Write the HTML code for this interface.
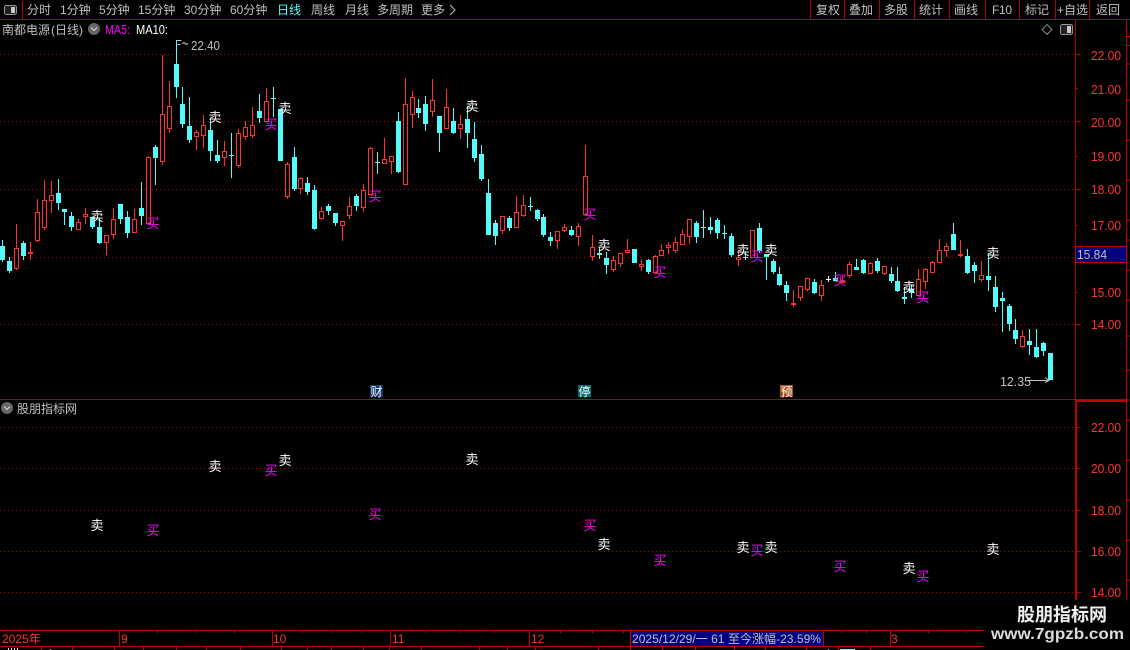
<!DOCTYPE html>
<html lang="zh"><head><meta charset="utf-8"><title>南都电源</title>
<style>
html,body{margin:0;padding:0;background:#000;width:1130px;height:650px;overflow:hidden}
svg{display:block;position:absolute;left:0;top:0}
text{font-family:"Liberation Sans","WenQuanYi Zen Hei","Noto Sans CJK SC",sans-serif;font-size:12px;fill:#c0c0c0}
.n{font-size:13px}
.r{fill:#ff3232}
.s{fill:#fff;font-size:13px;text-anchor:middle}
.b{fill:#ff00ff;font-size:13px;text-anchor:middle}
.grid{stroke:#a80000;stroke-width:1;stroke-dasharray:1 3;fill:none}
.ln{stroke:#b00000;stroke-width:1;fill:none}
</style></head><body>
<svg width="1130" height="650" viewBox="0 0 1130 650">
<rect width="1130" height="650" fill="#000"/>

<!-- grid lines -->
<path class="grid" d="M0 54.5H1075M0 121.5H1075M0 189.5H1075M0 257.5H1075M0 324.5H1075M0 427.5H1075M0 468.5H1075M0 510.5H1075M0 551.5H1075M0 592.5H1075"/>

<!-- cyan candles -->
<path fill="none" stroke="#54fcfc" stroke-width="1" d="M2.5 240V262M9.5 257V273M23.5 241V260M58.5 179V210M64.5 209V225M71.5 212V231M92.5 217V229M99.5 218V244M120.5 204V224M127.5 211V238M141.5 182V225M155.5 145V185M176.5 40V98M182.5 87V128M189.5 97V143M210.5 118V161M217.5 140V163M231.5 133V178M259.5 94V123M273.5 87V117M294.5 147V191M307.5 177V195M314.5 185V230M328.5 204V215M335.5 213V226M356.5 194V211M377.5 152V174M398.5 112V173M418.5 99V118M425.5 96V131M439.5 116V152M453.5 108V134M467.5 106V148M474.5 122V162M481.5 145V181M488.5 179V235M495.5 220V245M509.5 216V231M530.5 197V211M537.5 209V221M543.5 214V237M550.5 232V246M571.5 226V236M599.5 247V259M606.5 252V274M648.5 259V274M696.5 221V243M703.5 210V238M710.5 217V234M717.5 218V239M724.5 225V239M731.5 233V257M745.5 251V260M759.5 223V253M766.5 254V280M773.5 259V274M779.5 267V286M786.5 281V301M814.5 279V294M835.5 272V281M856.5 259V270M863.5 259V274M877.5 258V273M891.5 267V283M897.5 267V292M904.5 287V304M911.5 285V298M953.5 223V250M967.5 249V274M974.5 262V283M988.5 253V291M995.5 276V312M1002.5 292V332M1009.5 304V331M1015.5 319V344M1029.5 329V355M1036.5 329V358M1043.5 342V356"/>
<path fill="none" stroke="#54fcfc" stroke-width="5" d="M2.5 246V260M9.5 261V271M23.5 243V256M58.5 193V203M64.5 209V212M71.5 216V227M92.5 217V227M99.5 227V243M120.5 204V219M127.5 217V233M141.5 208V216M155.5 147V158M176.5 64V87M182.5 104V124M189.5 126V140M210.5 130V151M217.5 155V161M231.5 155V156M259.5 111V118M273.5 98V99M280.5 109V161M294.5 157V189M307.5 183V192M314.5 190V229M328.5 206V211M335.5 213V223M356.5 196V206M377.5 162V163M398.5 121V172M418.5 108V113M425.5 104V124M439.5 116V133M453.5 121V133M467.5 119V133M474.5 139V158M481.5 154V179M488.5 193V235M495.5 223V236M509.5 218V228M530.5 206V207M537.5 210V219M543.5 217V235M550.5 237V241M571.5 230V235M599.5 253V255M606.5 258V265M634.5 249V263M648.5 260V272M696.5 223V237M703.5 227V228M710.5 227V230M717.5 220V233M724.5 233V234M731.5 236V255M745.5 257V258M759.5 228V251M766.5 254V257M773.5 261V272M779.5 274V285M786.5 285V293M814.5 282V293M835.5 278V281M856.5 267V270M863.5 260V273M877.5 261V271M891.5 274V281M897.5 281V291M904.5 297V299M911.5 289V293M953.5 234V250M967.5 256V273M974.5 265V271M988.5 276V280M995.5 287V307M1002.5 298V301M1009.5 306V324M1015.5 330V339M1029.5 341V345M1036.5 347V357M1043.5 343V351M1050.5 353V380"/>

<!-- white doji -->
<path fill="none" stroke="#fff" d="M828.5 276V282M826 279.5H831"/>

<!-- red candles -->
<path fill="none" stroke="#ff3232" stroke-width="1" d="M16.5 224V270M30.5 242V260M37.5 199V242M44.5 180V230M51.5 181V213M78.5 219V230M85.5 208V224M106.5 235V255M113.5 208V239M134.5 209V233M148.5 156V224M162.5 55V165M169.5 81V133M196.5 130V150M203.5 115V148M224.5 141V166M238.5 129V168M245.5 121V140M252.5 107V138M266.5 88V122M287.5 162V199M300.5 177V194M321.5 207V220M342.5 221V241M349.5 197V219M363.5 184V212M370.5 147V195M384.5 138V164M391.5 156V174M405.5 78V185M412.5 91V128M432.5 79V117M446.5 89V129M460.5 115V139M502.5 216V234M516.5 196V228M523.5 195V217M557.5 231V249M564.5 224V232M578.5 223V246M585.5 145V215M592.5 235V261M613.5 256V272M620.5 253V267M627.5 239V253M641.5 259V271M655.5 255V273M661.5 244V256M668.5 242V254M675.5 237V253M682.5 229V245M689.5 219V244M738.5 250V266M752.5 230V258M793.5 290V307M800.5 286V301M807.5 278V291M821.5 280V301M842.5 276V283M849.5 262V278M870.5 262V274M884.5 266V275M918.5 269V296M925.5 268V289M932.5 261V273M939.5 239V263M946.5 243V257M960.5 240V257M981.5 261V282M1022.5 330V348"/>
<path fill="none" stroke="#ff3232" stroke-width="5" d="M30.5 252V254M793.5 303V305M842.5 280V283M960.5 254V256"/>
<path fill="#000" stroke="#ff3232" stroke-width="1" d="M14.5 248.5h4V268.5h-4zM35.5 212.5h4V240.5h-4zM42.5 200.5h4V227.5h-4zM49.5 195.5h4V200.5h-4zM76.5 222.5h4V229.5h-4zM83.5 214.5h4V216.5h-4zM104.5 235.5h4V242.5h-4zM111.5 219.5h4V234.5h-4zM132.5 219.5h4V232.5h-4zM146.5 157.5h4V223.5h-4zM160.5 114.5h4V161.5h-4zM167.5 106.5h4V128.5h-4zM194.5 132.5h4V136.5h-4zM201.5 125.5h4V135.5h-4zM222.5 151.5h4V157.5h-4zM236.5 133.5h4V165.5h-4zM243.5 127.5h4V136.5h-4zM250.5 125.5h4V135.5h-4zM264.5 101.5h4V121.5h-4zM285.5 164.5h4V196.5h-4zM298.5 178.5h4V188.5h-4zM319.5 211.5h4V218.5h-4zM340.5 221.5h4V225.5h-4zM347.5 206.5h4V215.5h-4zM361.5 190.5h4V207.5h-4zM368.5 148.5h4V194.5h-4zM382.5 159.5h4V163.5h-4zM389.5 156.5h4V161.5h-4zM403.5 104.5h4V184.5h-4zM410.5 97.5h4V114.5h-4zM430.5 100.5h4V111.5h-4zM444.5 107.5h4V128.5h-4zM458.5 124.5h4V128.5h-4zM500.5 216.5h4V230.5h-4zM514.5 212.5h4V227.5h-4zM521.5 205.5h4V215.5h-4zM555.5 231.5h4V240.5h-4zM562.5 227.5h4V230.5h-4zM576.5 226.5h4V236.5h-4zM583.5 176.5h4V214.5h-4zM590.5 247.5h4V256.5h-4zM611.5 260.5h4V269.5h-4zM618.5 253.5h4V263.5h-4zM625.5 250.5h4V252.5h-4zM639.5 264.5h4V266.5h-4zM653.5 256.5h4V272.5h-4zM659.5 250.5h4V255.5h-4zM666.5 245.5h4V247.5h-4zM673.5 242.5h4V250.5h-4zM680.5 234.5h4V244.5h-4zM687.5 219.5h4V236.5h-4zM736.5 257.5h4V259.5h-4zM750.5 230.5h4V257.5h-4zM798.5 286.5h4V297.5h-4zM805.5 278.5h4V289.5h-4zM819.5 285.5h4V295.5h-4zM847.5 264.5h4V275.5h-4zM868.5 263.5h4V273.5h-4zM882.5 266.5h4V273.5h-4zM916.5 279.5h4V295.5h-4zM923.5 269.5h4V281.5h-4zM930.5 262.5h4V272.5h-4zM937.5 250.5h4V262.5h-4zM944.5 246.5h4V250.5h-4zM979.5 275.5h4V279.5h-4zM1020.5 336.5h4V346.5h-4z"/>

<!-- high/low annotations -->
<path fill="none" stroke="#c0c0c0" d="M176.5 40.5h5M177.5 44.5h3M182 43.5l2-1 2 2 2-1"/>
<text x="191" y="50" class="n" textLength="29" lengthAdjust="spacingAndGlyphs">22.40</text>
<text x="1000" y="386" class="n" textLength="31" lengthAdjust="spacingAndGlyphs">12.35</text>
<path fill="none" stroke="#c0c0c0" d="M1027 380.5H1049M1045 377.5l4 3-4 2"/>

<!-- top bar -->
<path class="ln" d="M0 19.5H1130M22.5 0V19M810.5 0V19M844.5 0V19M879.5 0V19M914.5 0V19M949.5 0V19M985.5 0V19M1019.5 0V19M1055.5 0V19M1089.5 0V19"/>
<rect x="4.5" y="5.5" width="12" height="9" rx="2" fill="#222" stroke="#999"/>
<rect x="11" y="7" width="4" height="6" fill="#c8c8c8"/>
<text x="27" y="14">分时</text>
<text x="60" y="14">1分钟</text>
<text x="99" y="14">5分钟</text>
<text x="138" y="14">15分钟</text>
<text x="184" y="14">30分钟</text>
<text x="230" y="14">60分钟</text>
<text x="277" y="14" style="fill:#54fcfc">日线</text>
<text x="311" y="14">周线</text>
<text x="345" y="14">月线</text>
<text x="377" y="14">多周期</text>
<text x="421" y="14">更多</text>
<path fill="none" stroke="#c0c0c0" d="M450 5l5 5-5 5"/>
<text x="816" y="14">复权</text>
<text x="849" y="14">叠加</text>
<text x="884" y="14">多股</text>
<text x="919" y="14">统计</text>
<text x="954" y="14">画线</text>
<text x="992" y="14" textLength="20">F10</text>
<text x="1025" y="14">标记</text>
<text x="1057" y="14">+自选</text>
<text x="1096" y="14">返回</text>

<!-- title row -->
<text x="2" y="34">南都电源</text>
<text x="51" y="34">(日线)</text>
<circle cx="94" cy="29" r="6" fill="#666"/>
<path fill="none" stroke="#ddd" d="M91 27.5l3 3 3-3"/>
<text x="105" y="34" class="n" style="fill:#ff00ff" textLength="25" lengthAdjust="spacingAndGlyphs">MA5:</text>
<text x="136" y="34" class="n" style="fill:#fff" textLength="32" lengthAdjust="spacingAndGlyphs">MA10:</text>
<path fill="none" stroke="#888" d="M1047 24.5l5 5-5 5-5-5z"/>
<rect x="1060.5" y="24.5" width="12" height="10" rx="2" fill="#222" stroke="#999"/>
<rect x="1067" y="26" width="4" height="7" fill="#c8c8c8"/>

<!-- right axis -->
<path class="ln" d="M1075.5 19V399M1126.5 19V630M0 399.5H1126M1075 54.5H1081M1075 88.5H1078M1075 121.5H1081M1075 156.5H1078M1075 189.5H1081M1075 225.5H1078M1075 257.5H1081M1075 292.5H1078M1075 324.5H1081M1075 427.5H1081M1075 468.5H1081M1075 510.5H1081M1075 551.5H1081M1075 592.5H1081M1126 36.5H1130M1126 45.5H1130M1126 64H1130M1126 100H1130M1126 140H1130M1126 180H1130M1126 220H1130M1126 240H1130M1126 270H1130M1126 300H1130M1126 336H1130M1126 370H1130M1126 400H1130M1126 420H1130M1126 460H1130M1126 500H1130M1126 540H1130M1126 580H1130"/>
<path stroke="#c00000" stroke-width="2" fill="none" d="M1075 401H1126M1076 400V630"/>
<text x="1091" y="60" class="n r" textLength="30" lengthAdjust="spacingAndGlyphs">22.00</text>
<text x="1091" y="94" class="n r" textLength="30" lengthAdjust="spacingAndGlyphs">21.00</text>
<text x="1091" y="127" class="n r" textLength="30" lengthAdjust="spacingAndGlyphs">20.00</text>
<text x="1091" y="161" class="n r" textLength="30" lengthAdjust="spacingAndGlyphs">19.00</text>
<text x="1091" y="194" class="n r" textLength="30" lengthAdjust="spacingAndGlyphs">18.00</text>
<text x="1091" y="230" class="n r" textLength="30" lengthAdjust="spacingAndGlyphs">17.00</text>
<text x="1091" y="297" class="n r" textLength="30" lengthAdjust="spacingAndGlyphs">15.00</text>
<text x="1091" y="329" class="n r" textLength="30" lengthAdjust="spacingAndGlyphs">14.00</text>
<text x="1091" y="432" class="n r" textLength="30" lengthAdjust="spacingAndGlyphs">22.00</text>
<text x="1091" y="473" class="n r" textLength="30" lengthAdjust="spacingAndGlyphs">20.00</text>
<text x="1091" y="515" class="n r" textLength="30" lengthAdjust="spacingAndGlyphs">18.00</text>
<text x="1091" y="556" class="n r" textLength="30" lengthAdjust="spacingAndGlyphs">16.00</text>
<text x="1091" y="597" class="n r" textLength="30" lengthAdjust="spacingAndGlyphs">14.00</text>
<rect x="1075.5" y="246.5" width="51" height="16" fill="#000080" stroke="#c00000"/>
<text x="1077" y="259" class="n" textLength="30" lengthAdjust="spacingAndGlyphs">15.84</text>

<!-- event tags -->
<rect x="370" y="385" width="13" height="12" fill="#0b3a6e"/><text x="370.5" y="396" style="fill:#fff">财</text>
<rect x="578" y="385" width="13" height="12" fill="#0c6a70"/><text x="578.5" y="396" style="fill:#fff">停</text>
<rect x="780" y="385" width="13" height="12" fill="#a8501a"/><text x="780.5" y="396" style="fill:#fff">预</text>

<!-- signals main -->
<text class="s" x="97" y="221">卖</text>
<text class="b" x="153" y="228">买</text>
<text class="s" x="215" y="122">卖</text>
<text class="s" x="285" y="113">卖</text>
<text class="b" x="271" y="129">买</text>
<text class="b" x="375" y="201">买</text>
<text class="s" x="472" y="111">卖</text>
<text class="b" x="590" y="219">买</text>
<text class="s" x="604" y="250">卖</text>
<text class="b" x="660" y="277">买</text>
<text class="s" x="743" y="255">卖</text>
<text class="b" x="757" y="261">买</text>
<text class="s" x="771" y="255">卖</text>
<text class="b" x="840" y="285">买</text>
<text class="s" x="909" y="292">卖</text>
<text class="b" x="923" y="302">买</text>
<text class="s" x="993" y="258">卖</text>

<!-- lower panel header -->
<circle cx="7" cy="408" r="6" fill="#666"/>
<path fill="none" stroke="#ddd" d="M4 406.5l3 3 3-3"/>
<text x="17" y="413">股朋指标网</text>

<!-- signals lower -->
<text class="s" x="97" y="530">卖</text>
<text class="b" x="153" y="535">买</text>
<text class="s" x="215" y="471">卖</text>
<text class="b" x="271" y="475">买</text>
<text class="s" x="285" y="465">卖</text>
<text class="b" x="375" y="519">买</text>
<text class="s" x="472" y="464">卖</text>
<text class="b" x="590" y="530">买</text>
<text class="s" x="604" y="549">卖</text>
<text class="b" x="660" y="565">买</text>
<text class="s" x="743" y="552">卖</text>
<text class="b" x="757" y="555">买</text>
<text class="s" x="771" y="552">卖</text>
<text class="b" x="840" y="571">买</text>
<text class="s" x="909" y="573">卖</text>
<text class="b" x="923" y="581">买</text>
<text class="s" x="993" y="554">卖</text>

<!-- date axis -->
<rect x="984" y="600" width="146" height="50" fill="#000"/>
<path stroke="#c00000" fill="none" d="M0 630.5H984M0 646.5H984M119.5 630V646M272.5 630V646M390.5 630V646M529.5 630V646M823.5 630V646M890.5 630V646"/>
<path stroke="#c00000" fill="none" d="M157.5 631V633M196.5 631V633M234.5 631V633M302.5 631V633M331.5 631V633M361.5 631V633M425.5 631V633M460.5 631V633M494.5 631V633M560.5 631V633M592.5 631V633M623.5 631V633M841.5 631V633M866.5 631V633M928.5 631V633M966.5 631V633M41.5 647V650M72.5 647V650M114.5 647V650M143.5 647V650M176.5 647V650M206.5 647V650M240.5 647V650M281.5 647V650M307.5 647V650M331.5 647V650M363.5 647V650M389.5 647V650M421.5 647V650M479.5 647V650M507.5 647V650M535.5 647V650M598.5 647V650M630.5 647V650M662.5 647V650M695.5 647V650M734.5 647V650M765.5 647V650M806.5 647V650M838.5 647V650M870.5 647V650"/>
<path stroke="#ddd" fill="none" d="M8.5 648V650M11.5 648V650M14.5 648V650M17.5 648V650M50.5 649V650"/>
<path stroke="#54fcfc" fill="none" d="M828.5 649V650M840 649.5H855"/>
<text x="2" y="643" class="r">2025年</text>
<text x="121" y="643" class="r">9</text>
<text x="273" y="643" class="r">10</text>
<text x="392" y="643" class="r">11</text>
<text x="531" y="643" class="r">12</text>
<text x="891" y="643" class="r">3</text>
<rect x="630.5" y="630.5" width="193" height="16" fill="#000080" stroke="#c00000"/>
<text x="632" y="643" textLength="189" lengthAdjust="spacingAndGlyphs">2025/12/29/一 61 至今涨幅-23.59%</text>

<!-- watermark -->
<text x="1017" y="621" style="fill:#f0f0f0;font-size:18px;font-weight:bold">股朋指标网</text>
<text x="991" y="639" style="fill:#dcdcdc;font-size:15.5px;font-weight:bold" textLength="133" lengthAdjust="spacingAndGlyphs">www.7gpzb.com</text>
</svg>
</body></html>
